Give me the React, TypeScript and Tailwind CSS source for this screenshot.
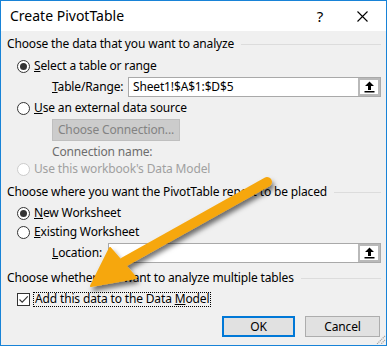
import React from "react";

function Radio({ checked, disabled }: { checked?: boolean; disabled?: boolean }) {
  return (
    <span
      className={
        disabled
          ? "flex h-[13px] w-[13px] shrink-0 items-center justify-center rounded-full border border-[#cccccc] bg-white"
          : "flex h-[13px] w-[13px] shrink-0 items-center justify-center rounded-full border border-[#333333] bg-white"
      }
    >
      {checked && <span className="h-[7px] w-[7px] rounded-full bg-[#333333]" />}
    </span>
  );
}

function SectionHeader({ text, className }: { text: string; className: string }) {
  return (
    <div className={`flex items-center ${className}`}>
      <span className="whitespace-nowrap">{text}</span>
      <div className="ml-[7px] h-px flex-1 bg-[#dcdcdc]" />
    </div>
  );
}

function UpArrow() {
  return (
    <svg width="11" height="12" viewBox="0 0 11 12">
      <path d="M5.5 0.5 L10 5 L7 5 L7 9 L4 9 L4 5 L1 5 Z" fill="#000" />
      <rect x="0.5" y="10" width="10" height="1.5" fill="#000" />
    </svg>
  );
}

function RefInput({ text }: { text?: string }) {
  return (
    <div className="flex h-full flex-1 border border-[#a9a9a9] bg-white">
      <div className="flex flex-1 items-center pl-[4px] text-black">{text}</div>
      <div className="flex w-[22px] items-center justify-center border-2 border-[#b9b9b9] bg-white">
        <UpArrow />
      </div>
    </div>
  );
}

export default function App() {
  return (
    <div className="relative flex h-[346px] w-[387px] flex-col border border-[#1883d7] font-['Noto_Sans',sans-serif] text-[12px] leading-[14px] tracking-[-0.15px] text-black">
      {/* title bar */}
      <div className="flex h-[30px] shrink-0 items-center bg-white">
        <span className="pl-[9px] text-[14px] leading-[16px] tracking-normal">Create PivotTable</span>
        <span className="ml-auto mr-[34px] text-[15px] leading-[16px]">?</span>
        <svg width="11" height="11" viewBox="0 0 11 11" className="mr-[18px]">
          <path d="M0.5 0.5 L10.5 10.5 M10.5 0.5 L0.5 10.5" stroke="#000" strokeWidth="1.1" />
        </svg>
      </div>

      {/* body */}
      <div className="flex flex-1 flex-col bg-[#f0f0f0] pl-[6px] pr-[5px] pt-[4px]">
        <SectionHeader text="Choose the data that you want to analyze" className="h-[18px]" />

        <div className="flex h-[24px] items-center gap-[4px] pl-[10px] pt-[2px]">
          <Radio checked />
          <span>
            <u>S</u>elect a table or range
          </span>
        </div>

        <div className="flex h-[20px] items-center pl-[45px]">
          <span className="w-[76px] shrink-0">
            <u>T</u>able/Range:
          </span>
          <RefInput text="Sheet1!$A$1:$D$5" />
        </div>

        <div className="flex h-[22px] items-center gap-[4px] pl-[10px]">
          <Radio />
          <span>
            <u>U</u>se an external data source
          </span>
        </div>

        <div className="flex h-[22px] pl-[45px]">
          <div className="flex w-[128px] items-center justify-center border border-[#bfbfbf] bg-[#cccccc] text-[#838383]">
            Choose Connection...
          </div>
        </div>

        <div className="flex h-[20px] items-center pl-[45px] pt-[2px] text-[#6d6d6d]">Connection name:</div>

        <div className="flex h-[16px] items-center gap-[4px] pl-[10px] text-[#a0a0a0]">
          <Radio disabled />
          <span>Use this workbook&apos;s Data Model</span>
        </div>

        <SectionHeader
          text="Choose where you want the PivotTable report to be placed"
          className="h-[28px] pt-[2px]"
        />

        <div className="flex h-[16px] items-center gap-[4px] pl-[10px]">
          <Radio checked />
          <span>
            <u>N</u>ew Worksheet
          </span>
        </div>

        <div className="flex h-[22px] items-center gap-[4px] pl-[10px]">
          <Radio />
          <span>
            <u>E</u>xisting Worksheet
          </span>
        </div>

        <div className="flex h-[20px] items-center pl-[45px]">
          <span className="w-[56px] shrink-0">
            <u>L</u>ocation:
          </span>
          <RefInput />
        </div>

        <SectionHeader text="Choose whether you want to analyze multiple tables" className="h-[30px]" />

        <div className="flex h-[12px] items-center pl-[10px]">
          <span className="flex h-[13px] w-[13px] shrink-0 items-center justify-center border border-[#333333] bg-white">
            <svg width="11" height="11" viewBox="0 0 11 11">
              <path d="M1.5 5.5 L4.2 8.2 L9.8 2.3" stroke="#333" strokeWidth="1.1" fill="none" />
            </svg>
          </span>
          <span className="ml-[3px] flex h-[15px] items-center border border-dotted border-black px-[1px]">
            <span>
              Add this data to the Data <u>M</u>odel
            </span>
          </span>
        </div>

        <div className="mt-[11px] flex justify-end gap-[10px] pr-[1px]">
          <div className="flex h-[21px] w-[73px] items-center justify-center border-2 border-[#0078d7] bg-[#e1e1e1]">
            OK
          </div>
          <div className="flex h-[21px] w-[75px] items-center justify-center border border-[#adadad] bg-[#e1e1e1]">
            Cancel
          </div>
        </div>
      </div>

      {/* resize grip */}
      <svg width="12" height="12" viewBox="0 0 12 12" className="absolute bottom-0 right-0">
        <path d="M11 3 L3 11 M11 7 L7 11" stroke="#a0a0a0" strokeWidth="1.2" strokeDasharray="1.2 0.8" />
      </svg>

      {/* callout arrow */}
      <svg
        width="387"
        height="346"
        viewBox="0 0 387 346"
        className="pointer-events-none absolute left-[-1px] top-[-1px]"
      >
        <defs>
          <filter id="sh" x="-20%" y="-20%" width="140%" height="140%">
            <feDropShadow dx="2" dy="4" stdDeviation="2.5" floodColor="#000" floodOpacity="0.55" />
          </filter>
        </defs>
        <g filter="url(#sh)">
          <line x1="267" y1="182" x2="124" y2="262" stroke="#f6a70e" strokeWidth="10" strokeLinecap="round" />
          <path d="M91 286 L110 248 L136 278 Z" fill="#f6a70e" stroke="#f6a70e" strokeWidth="2" strokeLinejoin="round" />
        </g>
      </svg>
    </div>
  );
}
